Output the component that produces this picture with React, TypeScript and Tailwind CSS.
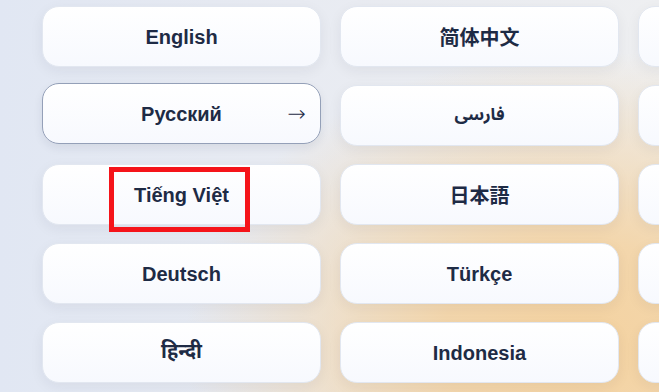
import { ReactNode } from "react";

type Lang = { label: string; font?: string; active?: boolean; marked?: boolean };

const langs: Lang[] = [
  { label: "English" },
  { label: "简体中文", font: "cjk-sc" },
  { label: "" },
  { label: "Русский", active: true },
  { label: "فارسی", font: "fa" },
  { label: "" },
  { label: "Tiếng Việt", marked: true },
  { label: "日本語", font: "cjk-jp" },
  { label: "" },
  { label: "Deutsch" },
  { label: "Türkçe" },
  { label: "" },
  { label: "हिन्दी", font: "hi" },
  { label: "Indonesia" },
  { label: "" },
];

function Card({ lang }: { lang: Lang }) {
  const fontClass =
    lang.font === "cjk-sc"
      ? "text-[20px] font-['Noto_Sans_CJK_SC',sans-serif]"
      : lang.font === "cjk-jp"
      ? "text-[20px] font-['Noto_Sans_CJK_JP',sans-serif]"
      : lang.font === "fa"
      ? "text-[17px] font-['Noto_Sans_Arabic','DejaVu_Sans',sans-serif]"
      : lang.font === "hi"
      ? "text-[20px] font-['Noto_Sans_Devanagari','Noto_Sans',sans-serif]"
      : "text-[20px] font-['Liberation_Sans','Noto_Sans',sans-serif]";

  let overlay: ReactNode = null;
  if (lang.marked) {
    overlay = (
      <div className="absolute left-[66px] top-[2px] w-[141px] h-[65px] border-[5px] border-[#f5141a] pointer-events-none" />
    );
  }

  return (
    <div
      className={
        "relative h-[61px] rounded-[17px] flex items-center justify-center bg-gradient-to-b from-white to-[#f7f9fe] " +
        (lang.active
          ? "border border-[#94a0b8] -translate-y-[2px] shadow-[0_4px_10px_rgba(30,41,59,0.08)]"
          : "border border-[#e2e7f0] shadow-[0_4px_14px_rgba(30,41,59,0.06)]")
      }
    >
      <span className={"font-bold text-[#1e2b45] leading-none " + fontClass}>{lang.label}</span>
      {lang.active && (
        <span className="absolute right-[14px] top-1/2 -translate-y-1/2 text-[22px] leading-none text-[#1e2b45] font-['DejaVu_Sans',sans-serif] font-light">
          →
        </span>
      )}
      {overlay}
    </div>
  );
}

export default function App() {
  return (
    <div className="w-[659px] h-[392px] overflow-hidden bg-[radial-gradient(ellipse_60%_75%_at_88%_88%,#f4d2a0_0%,rgba(244,210,160,0.85)_35%,rgba(244,210,160,0)_100%),linear-gradient(90deg,#e1e7f3_0%,#e8ebf2_45%,#eeeff1_100%)]">
      <div className="grid grid-cols-[repeat(3,279px)] gap-x-[19px] gap-y-[18px] pl-[42px] pt-[6px]">
        {langs.map((l, i) => (
          <Card key={i} lang={l} />
        ))}
      </div>
    </div>
  );
}
